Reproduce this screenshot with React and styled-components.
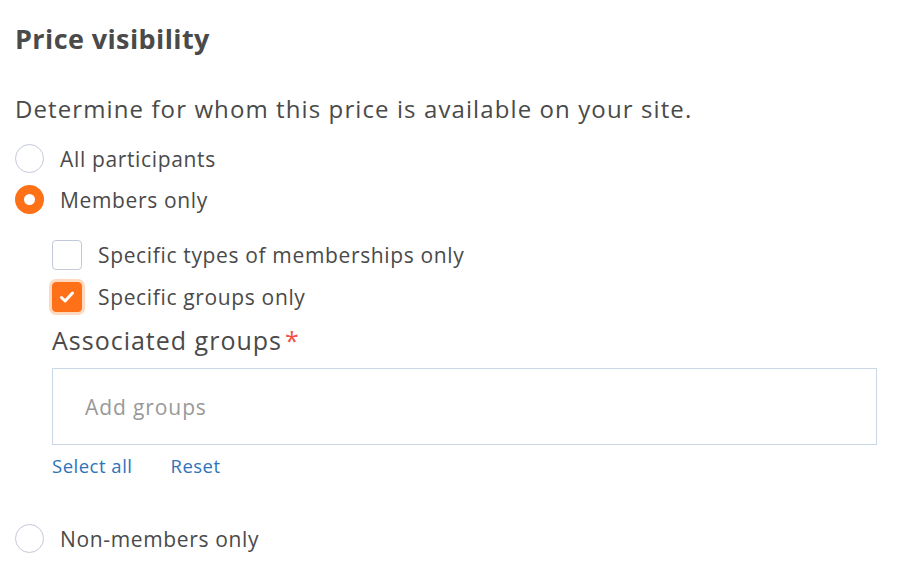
import React, { useState } from 'react';
import styled, { createGlobalStyle } from 'styled-components';

const GlobalStyle = createGlobalStyle`
  body {
    margin: 0;
    background: #fff;
    font-family: "Open Sans", "Lato", sans-serif;
    color: #4a4a4a;
  }
`;

const Panel = styled.div`
  width: 902px;
  height: 580px;
  box-sizing: border-box;
  padding: 22px 25px 0 15px;
  display: flex;
  flex-direction: column;
`;

const Title = styled.h2`
  margin: 0;
  font-size: 27px;
  font-weight: 700;
  line-height: 34px;
  letter-spacing: 0.4px;
  color: #4a4a4a;
`;

const Description = styled.p`
  margin: 38px 0 0;
  font-size: 24px;
  line-height: 30px;
  letter-spacing: 1.1px;
`;

const Option = styled.label`
  display: flex;
  align-items: center;
  gap: 16px;
  height: 41px;
  font-size: 21px;
  letter-spacing: 0.65px;
  cursor: pointer;
`;

const FirstOption = styled(Option)`
  margin-top: 14px;
`;

const LastOption = styled(Option)`
  margin-top: 40px;
`;

const Radio = styled.span`
  width: 29px;
  height: 29px;
  box-sizing: border-box;
  border-radius: 50%;
  border: ${(p) => (p.$checked ? '9px solid #ff7119' : '1.5px solid #c3c9d8')};
  background: #fff;
  flex-shrink: 0;
`;

const Nested = styled.div`
  padding-left: 37px;
  display: flex;
  flex-direction: column;
  margin-top: 14px;
`;

const CheckRow = styled(Option)`
  height: 42px;
`;

const Check = styled.span`
  width: 30px;
  height: 30px;
  box-sizing: border-box;
  border-radius: 4px;
  flex-shrink: 0;
  display: flex;
  align-items: center;
  justify-content: center;
  border: 1.5px solid ${(p) => (p.$checked ? '#ff7119' : '#c3c9d8')};
  background: ${(p) => (p.$checked ? '#ff7119' : '#fff')};
  box-shadow: ${(p) => (p.$checked ? '0 0 0 3px #ffd9bf' : 'none')};
`;

const FieldLabel = styled.div`
  margin-top: 5px;
  font-size: 25px;
  line-height: 34px;
  letter-spacing: 1px;
`;

const Star = styled.span`
  color: #f0504a;
  margin-left: 3px;
`;

const Input = styled.input`
  margin-top: 11px;
  height: 77px;
  width: 825px;
  box-sizing: border-box;
  border: 1.5px solid #c9d7e6;
  padding: 0 32px;
  font-family: inherit;
  font-size: 21px;
  letter-spacing: 0.9px;
  color: #4a4a4a;
  outline: none;
  &::placeholder {
    color: #999;
  }
`;

const Links = styled.div`
  display: flex;
  gap: 38px;
  margin-top: 9px;
`;

const LinkBtn = styled.a`
  color: #2f73b8;
  font-size: 18.5px;
  letter-spacing: 0.5px;
  line-height: 24px;
  cursor: pointer;
`;

const Tick = () => (
  <svg width="16" height="14" viewBox="0 0 16 14">
    <path d="M2.5 7.5 L6.2 11 L13.5 3" fill="none" stroke="#fff" strokeWidth="3" strokeLinecap="round" strokeLinejoin="round" />
  </svg>
);

export default function App() {
  const [choice, setChoice] = useState('members');
  const [types, setTypes] = useState(false);
  const [groups, setGroups] = useState(true);

  return (
    <>
      <GlobalStyle />
      <Panel>
        <Title>Price visibility</Title>
        <Description>Determine for whom this price is available on your site.</Description>
        <FirstOption onClick={() => setChoice('all')}>
          <Radio $checked={choice === 'all'} />
          All participants
        </FirstOption>
        <Option onClick={() => setChoice('members')}>
          <Radio $checked={choice === 'members'} />
          Members only
        </Option>
        <Nested>
          <CheckRow onClick={() => setTypes(!types)}>
            <Check $checked={types}>{types && <Tick />}</Check>
            Specific types of memberships only
          </CheckRow>
          <CheckRow onClick={() => setGroups(!groups)}>
            <Check $checked={groups}>{groups && <Tick />}</Check>
            Specific groups only
          </CheckRow>
          <FieldLabel>
            Associated groups<Star>*</Star>
          </FieldLabel>
          <Input placeholder="Add groups" />
          <Links>
            <LinkBtn>Select all</LinkBtn>
            <LinkBtn>Reset</LinkBtn>
          </Links>
        </Nested>
        <LastOption onClick={() => setChoice('non')}>
          <Radio $checked={choice === 'non'} />
          Non-members only
        </LastOption>
      </Panel>
    </>
  );
}
